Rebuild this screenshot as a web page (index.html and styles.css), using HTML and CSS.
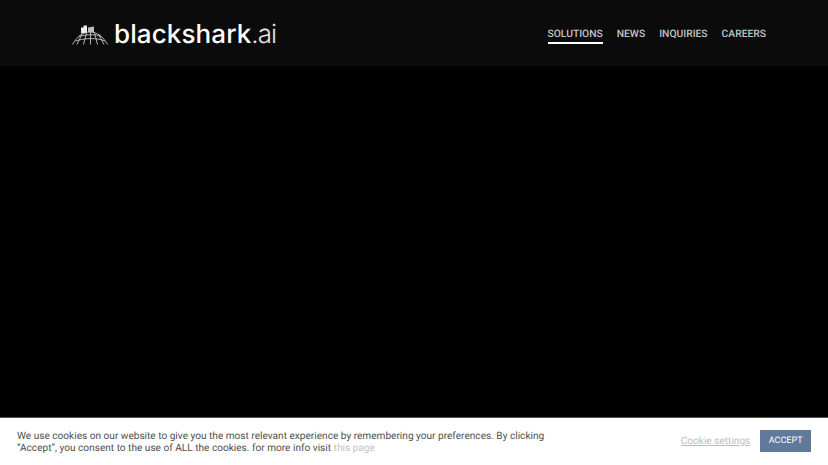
FILE: index.html
```html
<!DOCTYPE html>
<html>
  <head>
    <meta charset="utf-8">
    <title>blackshark.ai</title>
    <link rel="stylesheet" href="styles.css">
  </head>
  <body>
    <div class="header">
      <a class="logo">
        <svg class="globe" width="36" height="24" viewBox="0 0 36 24" fill="none" stroke="#c4c4c4" stroke-width="0.9">
          <path d="M0.5 21.5C5 13.5 11 9 18 9S31 13.5 35.5 21.5"/>
          <path d="M3.5 18C9 16.2 14 15.6 19 15.6S29 16.2 33 18"/>
          <path d="M7 13.5C11 12.2 15 11.8 19 11.8S26 12.2 29 13.5"/>
          <path d="M5 21.5L9.5 12M11.5 21.5L14.5 10M18.5 21.5V9M25.5 21.5L22.5 10M32 21.5L26.5 11"/>
          <path d="M9 10.5V4.5H11.5V2.5H15V9.5Z" fill="#ececec" stroke="none"/>
          <path d="M16 9V4.5L22 3.5V9.5Z" fill="#bcbcbc" stroke="none"/>
        </svg>
        <span class="wordmark">blackshark<span class="tld">.ai</span></span>
      </a>
      <div class="nav">
        <a class="nav-item active">SOLUTIONS</a>
        <a class="nav-item">NEWS</a>
        <a class="nav-item">INQUIRIES</a>
        <a class="nav-item">CAREERS</a>
      </div>
    </div>
    <div class="main"></div>
    <div class="cookie-bar">
      <p class="cookie-text">We use cookies on our website to give you the most relevant experience by remembering your preferences. By clicking “Accept”, you consent to the use of ALL the cookies. for more info visit <a class="page-link">this page</a></p>
      <div class="cookie-actions">
        <a class="settings">Cookie settings</a>
        <a class="accept">ACCEPT</a>
      </div>
    </div>
  </body>
</html>
```

FILE: styles.css
```css
html, body {
  margin: 0;
  height: 100%;
  overflow: hidden;
}
body {
  display: flex;
  flex-direction: column;
  background: #000;
  font-family: Roboto, "Liberation Sans", sans-serif;
  text-rendering: geometricPrecision;
}
.header {
  height: 66px;
  flex: none;
  background: #0b0b0b;
  display: flex;
  align-items: center;
  justify-content: space-between;
  padding: 0 62px 0 72px;
}
.logo {
  display: flex;
  align-items: center;
  gap: 6px;
  padding-top: 3px;
}
.globe {
  display: block;
}
.wordmark {
  font-family: Inter, sans-serif;
  font-size: 26px;
  line-height: 30px;
  font-weight: 500;
  color: #fff;
  letter-spacing: 0.1px;
}
.tld {
  font-weight: 300;
  color: #e4e4e4;
  letter-spacing: -1px;
}
.nav {
  display: flex;
  gap: 14px;
}
.nav-item {
  font-size: 10.3px;
  font-weight: 500;
  line-height: 14px;
  color: #c4c4c4;
  padding: 5px 0 1px;
  border-bottom: 2px solid transparent;
}
.nav-item.active {
  border-bottom-color: #fff;
}
.main {
  flex: 1;
}
.cookie-bar {
  height: 46px;
  flex: none;
  background: #fff;
  border-top: 1px solid #555;
  display: flex;
  align-items: center;
  justify-content: space-between;
  padding: 0 17px 1px;
  color: #555;
}
.cookie-text {
  margin: 0;
  width: 540px;
  padding-top: 3px;
  font-size: 10.1px;
  line-height: 12px;
  color: #505050;
}
.page-link {
  display: inline-block;
  color: #c4c4c4;
}
.cookie-actions {
  display: flex;
  align-items: center;
  gap: 10px;
}
.settings {
  font-size: 10.1px;
  padding-top: 1px;
  color: #bdbdbd;
  text-decoration: underline;
}
.accept {
  background: #61799b;
  color: #fff;
  font-size: 9px;
  line-height: 22px;
  padding: 0 8.5px;
}
```
